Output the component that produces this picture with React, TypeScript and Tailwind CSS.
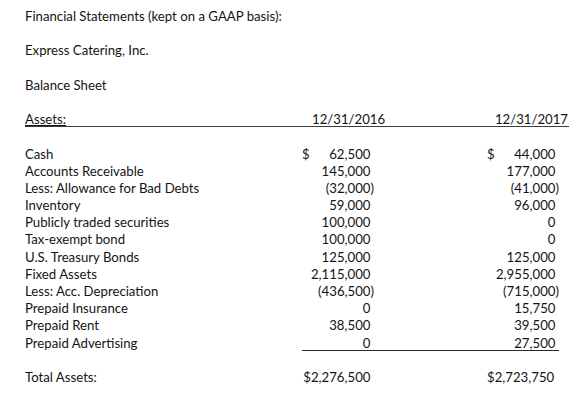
import React from "react";

type Row = { label: string; a?: string; b?: string; dollar?: boolean; line?: boolean };

const rows: Row[] = [
  { label: "Cash", a: "62,500", b: "44,000", dollar: true },
  { label: "Accounts Receivable", a: "145,000", b: "177,000" },
  { label: "Less: Allowance for Bad Debts", a: "(32,000)", b: "(41,000)" },
  { label: "Inventory", a: "59,000", b: "96,000" },
  { label: "Publicly traded securities", a: "100,000", b: "0" },
  { label: "Tax-exempt bond", a: "100,000", b: "0" },
  { label: "U.S. Treasury Bonds", a: "125,000", b: "125,000" },
  { label: "Fixed Assets", a: "2,115,000", b: "2,955,000" },
  { label: "Less: Acc. Depreciation", a: "(436,500)", b: "(715,000)" },
  { label: "Prepaid Insurance", a: "0", b: "15,750" },
  { label: "Prepaid Rent", a: "38,500", b: "39,500" },
  { label: "Prepaid Advertising", a: "0", b: "27,500", line: true },
];

// accounting format: positives get a hidden ")" so digits line up with negatives
function Num({ v }: { v: string }) {
  const neg = v.startsWith("(");
  return (
    <span>
      {v}
      {!neg && <span className="invisible">)</span>}
    </span>
  );
}

function Blank() {
  return <div className="h-[17.2px]" />;
}

export default function App() {
  return (
    <div className="w-[582px] h-[409px] bg-white pl-[25px] pt-[8px] font-['Lato',sans-serif] text-[13.2px] leading-[17.2px] text-[#141414] overflow-hidden">
      <div className="h-[17.2px]">Financial Statements (kept on a GAAP basis):</div>
      <Blank />
      <div className="h-[17.2px]">Express Catering, Inc.</div>
      <Blank />
      <div className="h-[17.2px]">Balance Sheet</div>
      <Blank />
      <div className="h-[17.2px]">
        <div className="flex w-[544px] h-[15.8px] border-b border-[#3c3c3c]">
          <div className="w-[277px] underline">Assets:</div>
          <div className="w-[80px] pl-[10px]">12/31/2016</div>
          <div className="flex-1 text-right pr-[1px]">12/31/2017</div>
        </div>
      </div>
      <Blank />
      {rows.map((r) => (
        <div key={r.label} className="flex h-[17.2px]">
          <div className="w-[277px]">{r.label}</div>
          <div className={`flex h-[16px] ${r.line ? "border-b border-[#2a2a2a]" : ""}`}>
            <div className="w-[80px] pr-[8px] flex justify-between">
              <span>{r.dollar ? "$" : ""}</span>
              <Num v={r.a ?? ""} />
            </div>
            <div className="w-[105px]" />
            <div className="w-[72px] flex justify-between">
              <span>{r.dollar ? "$" : ""}</span>
              <Num v={r.b ?? ""} />
            </div>
          </div>
        </div>
      ))}
      <Blank />
      <div className="flex h-[17.2px]">
        <div className="w-[277px]">Total Assets:</div>
        <div className="w-[80px] pr-[8px] text-right">
          <Num v="$2,276,500" />
        </div>
        <div className="w-[105px]" />
        <div className="w-[72px] pr-[4px] text-right">
          <Num v="$2,723,750" />
        </div>
      </div>
    </div>
  );
}
